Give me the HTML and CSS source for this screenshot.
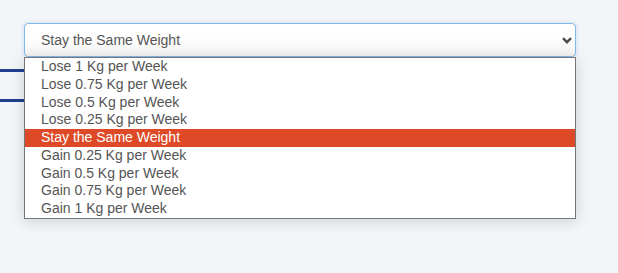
FILE: index.html
```html
<!DOCTYPE html>
<html>
<head>
<meta charset="utf-8">
<link rel="stylesheet" href="styles.css">
</head>
<body>
<div class="page">
  <div class="field">
    <div class="select">
      <span class="select-value">Stay the Same Weight</span>
      <svg class="chevron" width="10" height="7" viewBox="0 0 10 7"><polyline points="1,1.2 5,5.2 9,1.2" fill="none" stroke="#4a4a4a" stroke-width="2.4"/></svg>
    </div>
    <ul class="menu">
      <li class="opt">Lose 1 Kg per Week</li>
      <li class="opt">Lose 0.75 Kg per Week</li>
      <li class="opt">Lose 0.5 Kg per Week</li>
      <li class="opt">Lose 0.25 Kg per Week</li>
      <li class="opt selected">Stay the Same Weight</li>
      <li class="opt">Gain 0.25 Kg per Week</li>
      <li class="opt">Gain 0.5 Kg per Week</li>
      <li class="opt">Gain 0.75 Kg per Week</li>
      <li class="opt">Gain 1 Kg per Week</li>
    </ul>
  </div>
  <div class="rule rule-1"></div>
  <div class="rule rule-2"></div>
</div>
</body>
</html>
```
FILE: styles.css
```css
html, body {
  margin: 0;
  padding: 0;
  background: #f3f6f9;
  font-family: "Liberation Sans", Arial, sans-serif;
}
.page {
  width: 618px;
  height: 273px;
  padding-top: 23px;
  box-sizing: border-box;
  overflow: hidden;
}
.field {
  position: relative;
  margin-left: 24px;
  width: 552px;
  z-index: 2;
}
.select {
  height: 34px;
  box-sizing: border-box;
  border: 1px solid #86b7ea;
  border-radius: 4px;
  background: linear-gradient(#ffffff 40%, #f4f4f4);
  box-shadow: 0 0 4px rgba(120, 170, 230, 0.35);
  display: flex;
  align-items: center;
  padding: 0 3px 0 16px;
  color: #555;
  font-size: 14px;
}
.select-value {
  flex: 1;
}
.chevron {
  display: block;
  margin-top: 1px;
}
.menu {
  position: absolute;
  top: 34px;
  left: 0;
  width: 552px;
  box-sizing: border-box;
  margin: 0;
  padding: 0;
  list-style: none;
  background: #fff;
  border: 1px solid #767676;
  box-shadow: 0 2px 14px rgba(0, 0, 0, 0.16);
}
.opt {
  height: 17.75px;
  line-height: 17.75px;
  padding-left: 16px;
  font-size: 14px;
  color: #555;
}
.opt.selected {
  background: #de4a28;
  color: #fff;
}
.rule {
  height: 3px;
  width: 60px;
  background: #213f8f;
}
.rule-1 {
  margin-top: 12px;
}
.rule-2 {
  margin-top: 27px;
}
```
